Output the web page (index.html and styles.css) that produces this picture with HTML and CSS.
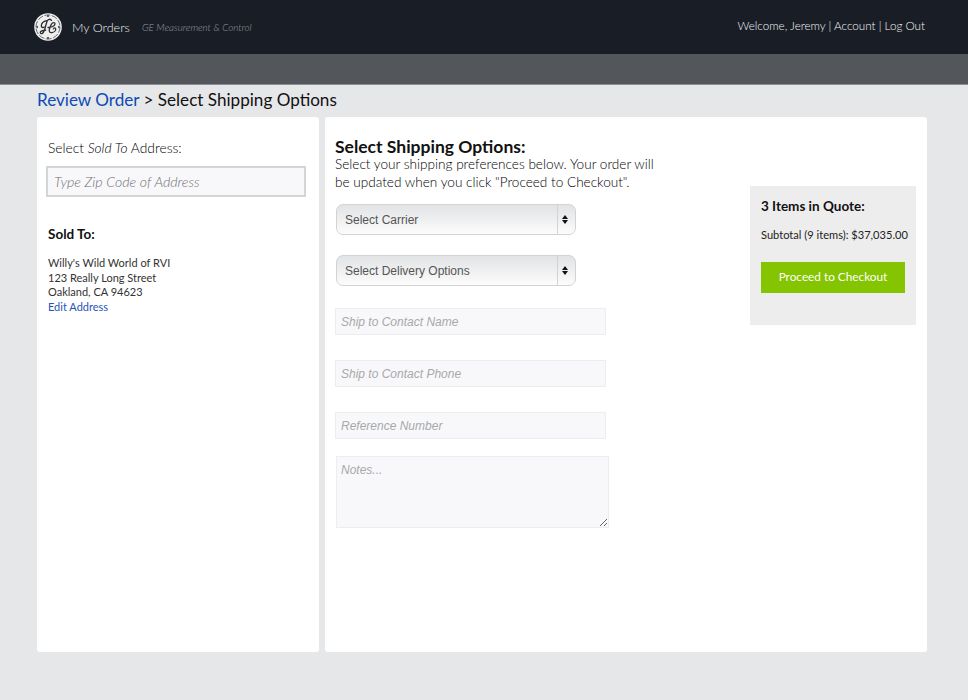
FILE: index.html
```html
<!DOCTYPE html>
<html lang="en">
<head>
<meta charset="utf-8">
<title>Select Shipping Options</title>
<link rel="stylesheet" href="styles.css">
</head>
<body>
<header class="topbar">
  <div class="brand">
    <svg class="logo" viewBox="0 0 28 28" width="28" height="28" aria-label="GE">
      <circle cx="14" cy="14" r="13.8" fill="#efefef"/>
      <circle cx="14" cy="14" r="12" fill="none" stroke="#30343a" stroke-width=".7" stroke-dasharray="6 1.500"/>
      <g fill="none" stroke="#2a2e35" stroke-width="1.300" stroke-linecap="round">
        <path d="M17.500 7.500c-1-2-3.500-1.500-4.500.8L10.500 17c-.8 2.500-1.500 3.700-3 3.700-1.300 0-1.700-1.500-.6-2.300 1.200-.9 3-1 4.800-1.200"/>
        <path d="M12.700 7.700C9.800 8.300 7.500 10.500 7.300 12.800c-.1 1.600 1.500 2.200 3 1.200"/>
        <path d="M14 14.500c3.500.1 6.800-1.500 7-3.600.1-1.700-2.300-1.900-3.400 0-.9 1.600-1.800 3.900-2.200 5.300-.6 2.200.4 3.800 2.500 3.400 2.400-.4 4-2.300 3.800-3.800-.1-1.300-1.900-1.400-2.300.1"/>
      </g>
      <g fill="#2a2e35">
        <path d="M14 1.500l1.300 2.300h-2.600zM14 26.500l-1.300-2.300h2.600zM1.500 14l2.300-1.300v2.600zM26.500 14l-2.300 1.300v-2.600z"/>
      </g>
    </svg>
    <span class="app-name">My Orders</span>
    <span class="division">GE Measurement &amp; Control</span>
  </div>
  <nav class="user-nav">Welcome, Jeremy | Account | Log Out</nav>
</header>
<div class="subbar"></div>
<main class="page">
  <h1 class="crumbs"><a href="#">Review Order</a> &gt; Select Shipping Options</h1>
  <div class="columns">
    <section class="card sold">
      <p class="sold-label">Select <em>Sold To</em> Address:</p>
      <input class="zip" type="text" placeholder="Type Zip Code of Address">
      <h3 class="sold-title">Sold To:</h3>
      <address class="addr">Willy's Wild World of RVI<br>123 Really Long Street<br>Oakland, CA 94623<br><a href="#">Edit Address</a></address>
    </section>
    <section class="card shipping">
      <form class="ship-form">
        <h2 class="ship-title">Select Shipping Options:</h2>
        <p class="ship-intro">Select your shipping preferences below. Your order will be updated when you click "Proceed to Checkout".</p>
        <div class="select select-first"><span>Select Carrier</span><i class="arrows"></i></div>
        <div class="select select-second"><span>Select Delivery Options</span><i class="arrows"></i></div>
        <input class="field field-first" type="text" placeholder="Ship to Contact Name">
        <input class="field" type="text" placeholder="Ship to Contact Phone">
        <input class="field" type="text" placeholder="Reference Number">
        <textarea class="notes" placeholder="Notes..."></textarea>
      </form>
      <aside class="quote">
        <h3 class="quote-title">3 Items in Quote:</h3>
        <p class="subtotal">Subtotal (9 items): $37,035.00</p>
        <a class="checkout" href="#">Proceed to Checkout</a>
      </aside>
    </section>
  </div>
</main>
</body>
</html>
```
FILE: styles.css
```css
* { box-sizing: border-box; }
html, body { margin: 0; height: 100%; }
body {
  background: #e6e7e9;
  color: #111;
  font-family: Lato, "Open Sans", sans-serif;
  height: 700px;
  overflow: hidden;
}
.topbar {
  height: 54px;
  background: #191e26;
  display: flex;
  align-items: center;
  justify-content: space-between;
  padding: 0 43px 0 34px;
}
.brand { display: flex; align-items: center; }
.logo { display: block; }
.app-name { color: #eceded; font-size: 12.600px; font-weight: 300; margin-left: 10px; }
.division { color: #9a9da1; font-size: 9.800px; font-weight: 300; font-style: italic; margin-left: 12px; }
.user-nav { color: #f4f4f4; font-size: 11.650px; font-weight: 300; margin-top: -3px; }
.subbar { height: 31px; background: #53575c; border-bottom: 1px solid #8b8e92; }
.page { padding: 0 41px 0 37px; }
.crumbs {
  margin: 0;
  height: 32px;
  line-height: 29px;
  font-size: 17.100px;
  font-weight: 400;
  color: #111;
}
.crumbs a { color: #0b4bb3; text-decoration: none; }
.columns { display: flex; gap: 6px; height: 535px; }
.card { background: #fff; border-radius: 3px; }
.sold { width: 282px; padding: 22px 13px 0 9px; }
.sold-label { margin: 0 0 0 2px; font-size: 13.800px; font-weight: 300; line-height: 17px; color: #000; }
.zip {
  display: block;
  width: 260px;
  height: 31px;
  margin-top: 10px;
  padding: 0 6px;
  background: #f8f8fa;
  border: 2px solid #d4d5d6;
  font: italic 300 14.200px Lato, sans-serif;
  color: #333;
}
.zip::placeholder { color: #6f6f72; opacity: 1; }
.sold-title { margin: 29px 0 0 2px; font-size: 13.500px; line-height: 17px; font-weight: 700; color: #111; }
.addr {
  margin: 13px 0 0 2px;
  font-style: normal;
  font-size: 11px;
  line-height: 14.500px;
  color: #333;
}
.addr a { color: #1f55bb; text-decoration: none; }
.shipping {
  flex: 1;
  display: flex;
  justify-content: space-between;
  align-items: flex-start;
  padding: 0 11px 0 10px;
}
.ship-form { width: 340px; padding-top: 20px; }
.ship-title { margin: 0; font-size: 17.500px; line-height: 19px; font-weight: 700; color: #111; }
.ship-intro { margin: 0; width: 325px; font-size: 13.600px; font-weight: 300; line-height: 17.500px; color: #000; }
.select {
  width: 240px;
  height: 31px;
  margin-left: 1px;
  display: flex;
  align-items: center;
  justify-content: space-between;
  padding-left: 8px;
  border: 1px solid #d2d3d5;
  border-radius: 7px;
  background: linear-gradient(#e2e3e5, #fcfcfc);
  font: 12px "Liberation Sans", Arial, sans-serif;
  color: #555;
}
.select-first { margin-top: 13px; }
.select-second { margin-top: 20px; }
.arrows {
  position: relative;
  width: 18px;
  height: 100%;
  border-left: 1px solid #d2d3d5;
}
.arrows::before, .arrows::after {
  content: "";
  position: absolute;
  left: 4px;
  border-left: 3.500px solid transparent;
  border-right: 3.500px solid transparent;
}
.arrows::before { top: 10px; border-bottom: 4px solid #111; }
.arrows::after { top: 15px; border-top: 4px solid #111; }
.field {
  display: block;
  width: 271px;
  height: 27px;
  margin: 25px 0 0;
  padding: 0 5px;
  background: #f8f8fa;
  border: 1px solid #ecedf0;
  font: italic 12px "Liberation Sans", Arial, sans-serif;
}
.field-first { margin-top: 22px; }
.field::placeholder, .notes::placeholder { color: #a7a8ab; opacity: 1; }
.notes {
  display: block;
  width: 273px;
  height: 72px;
  margin: 17px 0 0 1px;
  padding: 6px 4px;
  background: #f8f8fa;
  border: 1px solid #ecedf0;
  font: italic 12px "Liberation Sans", Arial, sans-serif;
}
.quote {
  width: 166px;
  height: 139px;
  margin-top: 69px;
  padding: 12px 11px 0 11px;
  background: #ededee;
}
.quote-title { margin: 0; font-size: 13.500px; line-height: 17px; font-weight: 700; color: #111; }
.subtotal {
  margin: 12px 0 0;
  font-size: 11.100px;
  line-height: 15px;
  color: #222;
  white-space: nowrap;
}
.checkout {
  display: block;
  width: 144px;
  height: 31px;
  margin-top: 20px;
  line-height: 30px;
  text-align: center;
  background: #84c400;
  color: #fff;
  font-size: 11.800px;
  text-decoration: none;
}
```
